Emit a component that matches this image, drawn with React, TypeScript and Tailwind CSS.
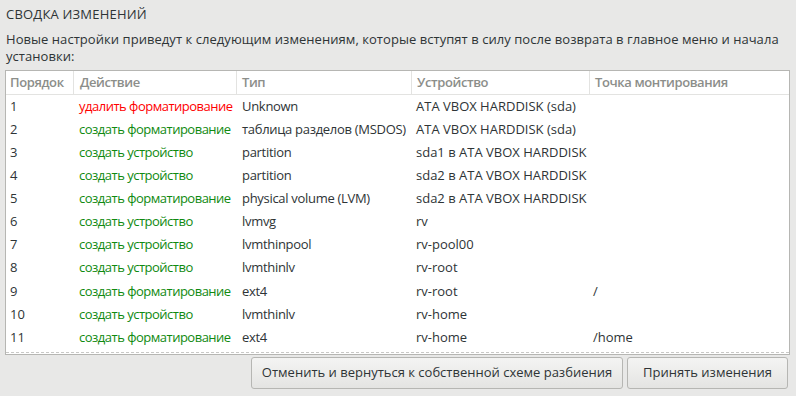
const rows = [
  { n: '1', action: 'удалить форматирование', del: true, type: 'Unknown', device: 'ATA VBOX HARDDISK (sda)', mount: '' },
  { n: '2', action: 'создать форматирование', type: 'таблица разделов (MSDOS)', device: 'ATA VBOX HARDDISK (sda)', mount: '' },
  { n: '3', action: 'создать устройство', type: 'partition', device: 'sda1 в ATA VBOX HARDDISK', mount: '' },
  { n: '4', action: 'создать устройство', type: 'partition', device: 'sda2 в ATA VBOX HARDDISK', mount: '' },
  { n: '5', action: 'создать форматирование', type: 'physical volume (LVM)', device: 'sda2 в ATA VBOX HARDDISK', mount: '' },
  { n: '6', action: 'создать устройство', type: 'lvmvg', device: 'rv', mount: '' },
  { n: '7', action: 'создать устройство', type: 'lvmthinpool', device: 'rv-pool00', mount: '' },
  { n: '8', action: 'создать устройство', type: 'lvmthinlv', device: 'rv-root', mount: '' },
  { n: '9', action: 'создать форматирование', type: 'ext4', device: 'rv-root', mount: '/' },
  { n: '10', action: 'создать устройство', type: 'lvmthinlv', device: 'rv-home', mount: '' },
  { n: '11', action: 'создать форматирование', type: 'ext4', device: 'rv-home', mount: '/home' },
];

const cols = 'grid grid-cols-[68px_163px_175px_178px_1fr]';

export default function App() {
  return (
    <div className="w-[796px] h-[396px] bg-[#e8e8e7] text-[#2e3436] font-['Open_Sans',sans-serif] overflow-hidden">
      <div className="px-[6px] pt-[4px]">
        <h2 className="text-[13px] leading-[20px] tracking-[0.2px]">СВОДКА ИЗМЕНЕНИЙ</h2>
        <p className="mt-[7px] text-[13px] leading-[17px] tracking-[0.05px]">
          Новые настройки приведут к следующим изменениям, которые вступят в силу после возврата в главное меню и начала установки:
        </p>
      </div>

      {/* Table */}
      <div className="ml-[5px] mt-[5px] w-[785px] h-[285px] flex flex-col bg-white border border-[#b6b6b3] overflow-hidden">
        <div className={`${cols} h-[24px] shrink-0 border-b border-[#e3e3e1] text-[13px] font-semibold tracking-[-0.4px] text-[#8c8e8a] whitespace-nowrap`}>
          <div className="pl-[4px] flex items-center border-r border-[#e3e3e1]">Порядок</div>
          <div className="pl-[6px] flex items-center border-r border-[#e3e3e1]">Действие</div>
          <div className="pl-[5px] flex items-center border-r border-[#e3e3e1]">Тип</div>
          <div className="pl-[5px] flex items-center border-r border-[#e3e3e1]">Устройство</div>
          <div className="pl-[5px] flex items-center">Точка монтирования</div>
        </div>
        <div className="flex-1 overflow-hidden">
          {rows.map((r) => (
            <div key={r.n} className={`${cols} h-[23.1px] items-center text-[13px] text-[#2e3436] whitespace-nowrap`}>
              <div className="pl-[4px]">{r.n}</div>
              <div className={r.del ? 'pl-[5px] tracking-[-0.5px] text-[#ff0000]' : 'pl-[5px] tracking-[-0.5px] text-[#108a10]'}>{r.action}</div>
              <div className="pl-[5px] tracking-[-0.3px]">{r.type}</div>
              <div className="pl-[4px]">{r.device}</div>
              <div className="pl-[3px]">{r.mount}</div>
            </div>
          ))}
        </div>
        <div className="shrink-0 h-[2px] border-t border-dashed border-[#c8c8c6]" />
      </div>

      {/* Buttons */}
      <div className="flex justify-end gap-[4px] pr-[8px] mt-[2px]">
        <button className="w-[372px] h-[32px] rounded-[3px] border border-[#b6b6b3] bg-gradient-to-b from-[#f4f4f3] to-[#e4e4e2] text-[13px] text-[#2e3436]">
          Отменить и вернуться к собственной схеме разбиения
        </button>
        <button className="w-[161px] h-[32px] rounded-[3px] border border-[#b6b6b3] bg-gradient-to-b from-[#f4f4f3] to-[#e4e4e2] text-[13px] text-[#2e3436]">
          Принять изменения
        </button>
      </div>
    </div>
  );
}
